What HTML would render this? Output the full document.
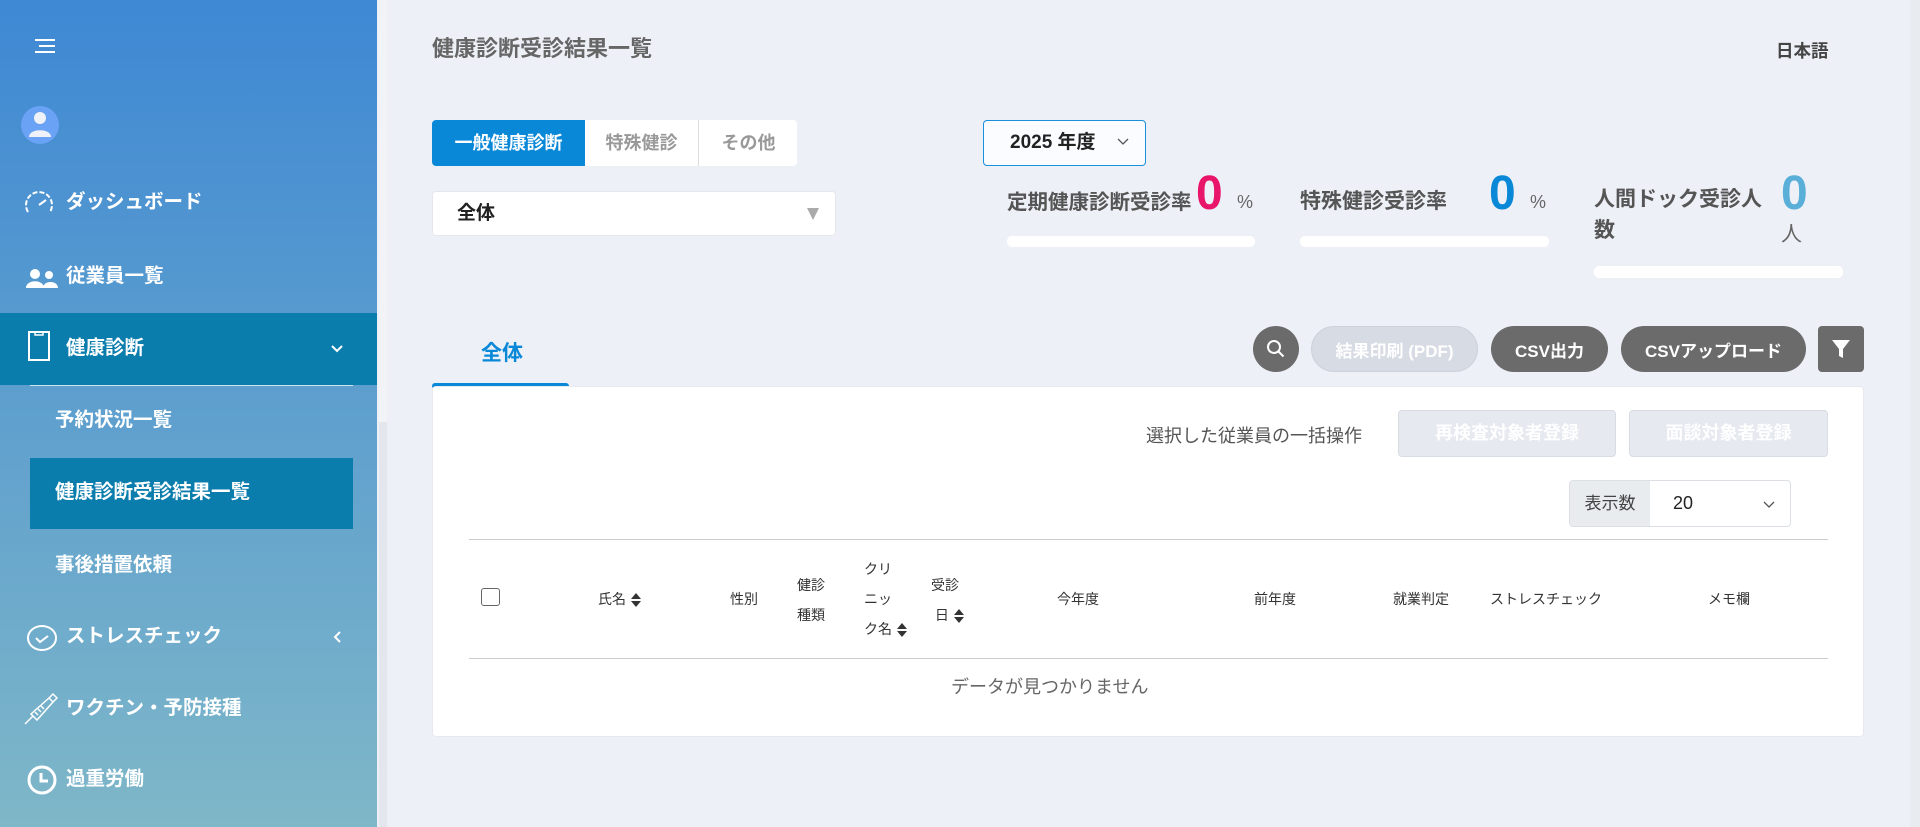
<!DOCTYPE html>
<html><head><meta charset="utf-8"><style>
*{box-sizing:border-box;margin:0;padding:0}
body{width:1920px;height:827px;overflow:hidden;background:#edf0f7;font-family:"Liberation Sans","Noto Sans CJK JP",sans-serif;position:relative}
.a{position:absolute}
#sb{left:0;top:0;width:377px;height:827px;background:linear-gradient(#3e88d4,#7fb7c8)}
.mi{position:absolute;left:66px;color:#fff;font-weight:bold;font-size:19.5px;line-height:24px}
.sub{position:absolute;left:55px;color:#fff;font-weight:bold;font-size:19.5px;line-height:24px}
.ic{position:absolute}
.btn{position:absolute;top:326px;height:46px;border-radius:23px;background:#6b6b6b;color:#fff;font-weight:bold;font-size:17px;display:flex;align-items:center;justify-content:center}
.th{position:absolute;font-size:14px;color:#333;line-height:30px}
</style></head><body>
<div id="sb" class="a">
 <svg class="ic" style="left:33px;top:38px" width="24" height="16"><path d="M2 2h20M6 8h16M2 14h20" stroke="#fff" stroke-width="2"/></svg>
 <svg class="ic" style="left:20px;top:105px" width="40" height="40"><circle cx="20" cy="20" r="19" fill="#6aa3f5"/><circle cx="20" cy="13" r="6" fill="#f0f2f8"/><path d="M9 32c0-9 22-9 22 0z" fill="#f0f2f8"/></svg>
 <svg class="ic" style="left:23px;top:188px" width="32" height="28"><path d="M5 24A13 13 0 1 1 27 24" fill="none" stroke="#fff" stroke-width="2" stroke-dasharray="5 2"/><path d="M16 17l7-5" stroke="#fff" stroke-width="2"/></svg>
 <div class="mi" style="top:190px">ダッシュボード</div>
 <svg class="ic" style="left:26px;top:268px" width="32" height="20"><circle cx="9" cy="6" r="5" fill="#fff"/><circle cx="23" cy="7" r="4" fill="#fff"/><path d="M0 20c0-9 18-9 18 0zM17 20c0-8 15-8 15 0z" fill="#fff"/></svg>
 <div class="mi" style="top:264px">従業員一覧</div>
 <div class="a" style="left:0;top:313px;width:377px;height:72px;background:#0b7dad"></div>
 <div class="a" style="left:30px;top:385px;width:323px;height:1px;background:#cfe3ee"></div>
 <svg class="ic" style="left:27px;top:330px" width="24" height="32"><rect x="2" y="2" width="20" height="28" fill="none" stroke="#fff" stroke-width="2"/><path d="M8 2v3h8V2" stroke="#fff" stroke-width="1.5" fill="none"/></svg>
 <div class="mi" style="top:336px">健康診断</div>
 <svg class="ic" style="left:330px;top:344px" width="14" height="10"><path d="M2 2l5 5 5-5" stroke="#fff" stroke-width="2" fill="none"/></svg>
 <div class="sub" style="top:408px">予約状況一覧</div>
 <div class="a" style="left:30px;top:458px;width:323px;height:71px;background:#0b7dad"></div>
 <div class="sub" style="top:480px">健康診断受診結果一覧</div>
 <div class="sub" style="top:553px">事後措置依頼</div>
 <svg class="ic" style="left:26px;top:624px" width="32" height="28"><ellipse cx="16" cy="14" rx="14" ry="12" fill="none" stroke="#fff" stroke-width="2"/><path d="M10 14l4 4 8-6" stroke="#fff" stroke-width="2" fill="none"/></svg>
 <div class="mi" style="top:624px">ストレスチェック</div>
 <svg class="ic" style="left:332px;top:630px" width="10" height="14"><path d="M8 2l-5 5 5 5" stroke="#fff" stroke-width="2" fill="none"/></svg>
 <svg class="ic" style="left:23px;top:690px" width="38" height="36"><path d="M2 34l8-8M8 24l18-16 4 4-16 18zM26 8l4-4 4 4-4 4M12 22l3 3M15 19l3 3M18 16l3 3" stroke="#fff" stroke-width="1.5" fill="none"/></svg>
 <div class="mi" style="top:696px">ワクチン・予防接種</div>
 <svg class="ic" style="left:26px;top:764px" width="32" height="32"><circle cx="16" cy="16" r="13" fill="none" stroke="#fff" stroke-width="3"/><path d="M15 9v8h7" stroke="#fff" stroke-width="3" fill="none"/></svg>
 <div class="mi" style="top:767px">過重労働</div>
</div>
<div class="a" style="left:379px;top:0;width:8px;height:422px;background:#f1f3f6"></div>
<div class="a" style="left:379px;top:422px;width:8px;height:405px;background:#e3e7ed"></div>
<div class="a" style="left:1910px;top:0;width:10px;height:827px;background:#e8ebf0"></div>

<div class="a" style="left:432px;top:31px;font-size:22px;font-weight:bold;color:#666">健康診断受診結果一覧</div>
<div class="a" style="left:1776px;top:38px;font-size:17.5px;font-weight:bold;color:#444">日本語</div>

<div class="a" style="left:432px;top:120px;width:365px;height:46px;background:#fff;border-radius:4px;overflow:hidden;font-size:18px;font-weight:bold">
 <div class="a" style="left:0;top:0;width:153px;height:46px;background:#0a88d8;color:#fff;text-align:center;line-height:46px">一般健康診断</div>
 <div class="a" style="left:153px;top:0;width:114px;height:46px;color:#999;text-align:center;line-height:46px;border-right:1px solid #ddd">特殊健診</div>
 <div class="a" style="left:268px;top:0;width:97px;height:46px;color:#999;text-align:center;line-height:46px">その他</div>
</div>
<div class="a" style="left:983px;top:120px;width:163px;height:46px;background:#fafcff;border:1px solid #1a8fdc;border-radius:4px;font-size:19px;font-weight:bold;color:#222;line-height:44px;padding-left:26px">2025 年度</div>
<svg class="a" style="left:1117px;top:138px" width="12" height="8"><path d="M1 1l5 5 5-5" stroke="#555" stroke-width="1.3" fill="none"/></svg>
<div class="a" style="left:432px;top:191px;width:404px;height:45px;background:#fff;border:1px solid #e4e7ec;border-radius:4px;font-size:19px;font-weight:bold;color:#222;line-height:43px;padding-left:24px">全体</div>
<svg class="a" style="left:806px;top:207px" width="14" height="14"><path d="M1 1h12L7 13z" fill="#aaa"/></svg>

<div class="a" style="left:1007px;top:185px;font-size:20.5px;font-weight:bold;color:#555">定期健康診断受診率</div>
<div class="a" style="left:1196px;top:166px;font-size:48px;font-weight:bold;color:#e8156a;line-height:56px">0</div>
<div class="a" style="left:1237px;top:192px;font-size:18px;color:#666">%</div>
<div class="a" style="left:1007px;top:236px;width:248px;height:11px;background:#fff;border-radius:5px"></div>
<div class="a" style="left:1300px;top:185px;font-size:21px;font-weight:bold;color:#555">特殊健診受診率</div>
<div class="a" style="left:1489px;top:166px;font-size:48px;font-weight:bold;color:#0a88d8;line-height:56px">0</div>
<div class="a" style="left:1530px;top:192px;font-size:18px;color:#666">%</div>
<div class="a" style="left:1300px;top:236px;width:249px;height:11px;background:#fff;border-radius:5px"></div>
<div class="a" style="left:1594px;top:184px;font-size:21px;font-weight:bold;color:#555;line-height:31px;width:190px">人間ドック受診人<br>数</div>
<div class="a" style="left:1781px;top:166px;font-size:48px;font-weight:bold;color:#5aafd8;line-height:56px">0</div>
<div class="a" style="left:1781px;top:218px;font-size:21px;color:#666">人</div>
<div class="a" style="left:1594px;top:266px;width:249px;height:12px;background:#fff;border-radius:5px"></div>

<div class="a" style="left:481px;top:337px;font-size:21px;font-weight:bold;color:#0a88d8">全体</div>
<div class="a" style="left:432px;top:383px;width:137px;height:6px;background:#0a88d8;border-radius:3px"></div>

<div class="btn" style="left:1253px;width:46px"><svg width="20" height="20"><circle cx="8" cy="8" r="6" stroke="#fff" stroke-width="2" fill="none"/><path d="M12.5 12.5l5 5" stroke="#fff" stroke-width="2"/></svg></div>
<div class="btn" style="left:1311px;width:167px;background:#d7dbe3;color:#fff;border:1px solid #cdd2da">結果印刷 (PDF)</div>
<div class="btn" style="left:1491px;width:117px">CSV出力</div>
<div class="btn" style="left:1621px;width:185px">CSVアップロード</div>
<div class="btn" style="left:1818px;width:46px;border-radius:4px"><svg width="20" height="22"><path d="M1 2h18l-7 9v9l-4-2v-7z" fill="#fff"/></svg></div>

<div class="a" style="left:432px;top:386px;width:1432px;height:351px;background:#fff;border-radius:4px;border:1px solid #e6e9ee"></div>
<div class="a" style="left:1146px;top:422px;font-size:18px;color:#555">選択した従業員の一括操作</div>
<div class="a" style="left:1398px;top:410px;width:218px;height:47px;background:#e6e9ef;border:1px solid #d8dce3;border-radius:4px;color:#fff;font-weight:bold;font-size:18px;text-align:center;line-height:45px">再検査対象者登録</div>
<div class="a" style="left:1629px;top:410px;width:199px;height:47px;background:#e6e9ef;border:1px solid #d8dce3;border-radius:4px;color:#fff;font-weight:bold;font-size:18px;text-align:center;line-height:45px">面談対象者登録</div>
<div class="a" style="left:1569px;top:480px;width:222px;height:47px;border:1px solid #dcdfe4;border-radius:4px;background:#fff;overflow:hidden">
 <div class="a" style="left:0;top:0;width:80px;height:45px;background:#e9ecef;font-size:17px;color:#444;line-height:45px;text-align:center">表示数</div>
 <div class="a" style="left:103px;top:0;font-size:18px;color:#222;line-height:45px">20</div>
 <svg class="a" style="left:193px;top:20px" width="12" height="8"><path d="M1 1l5 5 5-5" stroke="#555" stroke-width="1.3" fill="none"/></svg>
</div>
<div class="a" style="left:469px;top:539px;width:1359px;height:1px;background:#ccc"></div>
<div class="a" style="left:469px;top:658px;width:1359px;height:1px;background:#ccc"></div>
<div class="a" style="left:481px;top:588px;width:19px;height:18px;border:1.5px solid #666;border-radius:3px"></div>
<div class="th" style="left:598px;top:584px">氏名 <svg width="12" height="18" style="vertical-align:middle"><path d="M1 8L6 2l5 6zM1 10l5 6 5-6z" fill="#333"/></svg></div>
<div class="th" style="left:730px;top:584px">性別</div>
<div class="th" style="left:797px;top:570px">健診<br>種類</div>
<div class="th" style="left:864px;top:554px">クリ<br>ニッ<br>ク名 <svg width="12" height="18" style="vertical-align:middle"><path d="M1 8L6 2l5 6zM1 10l5 6 5-6z" fill="#333"/></svg></div>
<div class="th" style="left:931px;top:570px">受診<br>&nbsp;日 <svg width="12" height="18" style="vertical-align:middle"><path d="M1 8L6 2l5 6zM1 10l5 6 5-6z" fill="#333"/></svg></div>
<div class="th" style="left:1057px;top:584px">今年度</div>
<div class="th" style="left:1254px;top:584px">前年度</div>
<div class="th" style="left:1393px;top:584px">就業判定</div>
<div class="th" style="left:1490px;top:584px">ストレスチェック</div>
<div class="th" style="left:1708px;top:584px">メモ欄</div>
<div class="a" style="left:951px;top:673px;font-size:18px;color:#666">データが見つかりません</div>
</body></html>
